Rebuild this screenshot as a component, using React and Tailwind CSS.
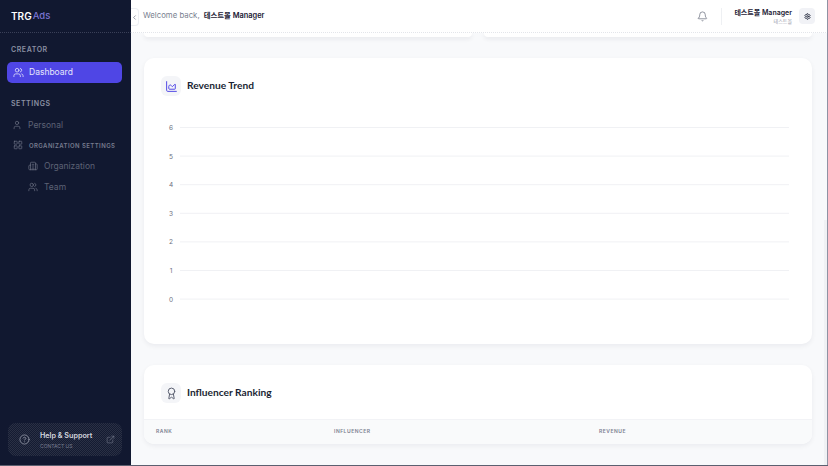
import { Bell, ChartArea, ChevronLeft, CircleHelp, ExternalLink, Award, LayoutGrid, User, Users, Building2, Settings } from "lucide-react";

const FONT = "font-['Inter','Noto_Sans_CJK_KR',sans-serif]";
const TICKS = [6, 5, 4, 3, 2, 1, 0];

function SectionLabel({ children, className = "" }) {
  return <div className={`px-[11px] text-[7px] font-semibold tracking-[0.08em] text-[#8b90a3] ${className}`}>{children}</div>;
}

function NavItem({ icon: Icon, label, className = "" }) {
  return (
    <div className={`flex h-[20px] items-center gap-[6px] text-[8.5px] text-[#5d6275] ${className}`}>
      <Icon size={10} strokeWidth={1.6} className="text-[#6f7487]" />
      <span>{label}</span>
    </div>
  );
}

function Sidebar() {
  return (
    <aside className="flex h-full w-[131px] shrink-0 flex-col bg-[#111830]">
      <div className="flex h-[33px] shrink-0 items-center border-b border-dotted border-[#3a4058] pl-[11px] text-[10px] font-semibold text-white">
        TRG<span className="ml-[1px] text-[9.5px] font-medium text-[#7a75d0]">Ads</span>
      </div>
      <SectionLabel className="mt-[12px]">CREATOR</SectionLabel>
      <div className="ml-[7px] mr-[9px] mt-[6px] flex h-[21px] items-center gap-[5px] rounded-[5px] bg-[#4f46e5] pl-[6px] text-[8.5px] text-[#e6e6fb]">
        <Users size={11} strokeWidth={1.7} />
        <span>Dashboard</span>
      </div>
      <SectionLabel className="mt-[16px]">SETTINGS</SectionLabel>
      <NavItem icon={User} label="Personal" className="mt-[6px] pl-[12px]" />
      <div className="flex h-[20px] items-center gap-[6px] pl-[13px] text-[6px] font-semibold tracking-[0.07em] text-[#767b8e]">
        <LayoutGrid size={10} strokeWidth={1.5} className="text-[#767b8e]" />
        <span>ORGANIZATION SETTINGS</span>
      </div>
      <NavItem icon={Building2} label="Organization" className="mt-[1px] pl-[28px]" />
      <NavItem icon={Users} label="Team" className="mt-[1px] pl-[28px]" />
      <div className="mb-[9px] ml-[8px] mr-[9px] mt-auto flex h-[33px] items-center rounded-[8px] bg-[repeating-conic-gradient(#2a3044_0_25%,#141b32_0_50%)] bg-[length:2px_2px] pl-[6px] pr-[7px]">
        <div className="flex h-[20px] w-[20px] items-center justify-center rounded-[5px]">
          <CircleHelp size={11} strokeWidth={1.5} className="text-[#a5a9b8]" />
        </div>
        <div className="ml-[6px] flex-1 pt-[2px] leading-none">
          <div className="text-[7.2px] font-semibold text-[#d5d7df]">Help &amp; Support</div>
          <div className="mt-[4px] text-[5px] text-[#777c8e]">CONTACT US</div>
        </div>
        <ExternalLink size={9} strokeWidth={1.5} className="text-[#777c8e]" />
      </div>
    </aside>
  );
}

function Header() {
  return (
    <header className="relative flex h-[33px] shrink-0 items-center border-b border-dotted border-[#e3e5ea] bg-white pl-[12px] pr-[13px]">
      <div className="absolute left-0 top-[8px] flex h-[18px] w-[8px] items-center justify-center rounded-r-[4px] border border-l-0 border-[#eceef2] bg-white">
        <ChevronLeft size={7} strokeWidth={2} className="text-[#555a6c]" />
      </div>
      <span className="text-[7.8px] text-[#7a7f90]">Welcome back,</span>
      <span className="ml-[4px] text-[7.4px] font-semibold text-[#1c2135]">테스트몰 Manager</span>
      <Bell size={11} strokeWidth={1.4} className="ml-auto text-[#555a6c]" />
      <div className="ml-[13px] h-[17px] w-px bg-[#eef0f3]" />
      <div className="ml-[12px] text-right leading-none">
        <div className="text-[7px] font-semibold text-[#1c2135]">테스트몰 Manager</div>
        <div className="mt-[3px] text-[5px] text-[#9a9eac]">테스트몰</div>
      </div>
      <div className="ml-[7px] flex h-[16px] w-[16px] items-center justify-center rounded-[4px] bg-[#f1f2f6]">
        <Settings size={7} strokeWidth={3} className="text-[#2a2f42]" />
      </div>
    </header>
  );
}

function CardTitle({ icon: Icon, iconClass, title }) {
  return (
    <div className="flex items-center gap-[6px]">
      <div className="flex h-[20px] w-[20px] items-center justify-center rounded-[6px] bg-[#f4f5f8]">
        <Icon size={13} strokeWidth={1.8} className={iconClass} />
      </div>
      <h2 className="font-['Lato',sans-serif] text-[10.2px] font-bold text-[#1a1f33]">{title}</h2>
    </div>
  );
}

function RevenueChart() {
  return (
    <svg width="667" height="200" className="mt-[23px] block">
      {TICKS.map((tick, i) => {
        const y = 8.5 + i * 28.6;
        return (
          <g key={tick}>
            <line x1="36" x2="645" y1={y} y2={y} stroke="#f0f1f4" strokeWidth="1" />
            <text x="27" y={y + 2.5} fontSize="6.5" textAnchor="middle" fill="#6b6f7e">{tick}</text>
          </g>
        );
      })}
    </svg>
  );
}

export default function App() {
  return (
    <div className={`relative flex h-[466px] w-[828px] overflow-hidden border-b border-[#5c6070] bg-[#f8f9fb] ${FONT}`}>
      <Sidebar />
      <div className="flex min-w-0 flex-1 flex-col">
        <Header />
        <main className="flex-1 overflow-hidden pl-[13px] pr-[16px]">
          <div className="flex gap-[12px]">
            <div className="h-[4px] flex-1 rounded-b-[10px] bg-white shadow-[0_2px_4px_rgba(20,25,50,0.08)]" />
            <div className="h-[4px] flex-1 rounded-b-[10px] bg-white shadow-[0_2px_4px_rgba(20,25,50,0.08)]" />
          </div>
          <section className="mt-[21px] h-[286px] rounded-[10px] bg-white pl-[17px] pt-[18px] shadow-[0_2px_5px_rgba(20,25,50,0.06)]">
            <CardTitle icon={ChartArea} iconClass="text-[#4f46e5]" title="Revenue Trend" />
            <div className="-ml-[17px]">
              <RevenueChart />
            </div>
          </section>
          <section className="mt-[21px] h-[79px] overflow-hidden rounded-[10px] bg-white shadow-[0_2px_5px_rgba(20,25,50,0.06)]">
            <div className="flex h-[54px] items-center pl-[17px] pt-[2px]">
              <CardTitle icon={Award} iconClass="text-[#565b6d]" title="Influencer Ranking" />
            </div>
            <div className="grid h-[25px] grid-cols-[178px_265px_1fr] items-center border-t border-[#f2f3f6] bg-[#f9fafb] pl-[12px] text-[5px] font-semibold tracking-[0.1em] text-[#7c8091]">
              <span>RANK</span>
              <span>INFLUENCER</span>
              <span>REVENUE</span>
            </div>
          </section>
        </main>
      </div>
      {/* scrollbar thumb and the window's right edge */}
      <div className="absolute bottom-0 right-[1px] top-[220px] w-[3px] bg-[#f0f1f4]" />
      <div className="absolute bottom-0 right-0 top-0 w-[1px] bg-[#8f92a3]" />
    </div>
  );
}
